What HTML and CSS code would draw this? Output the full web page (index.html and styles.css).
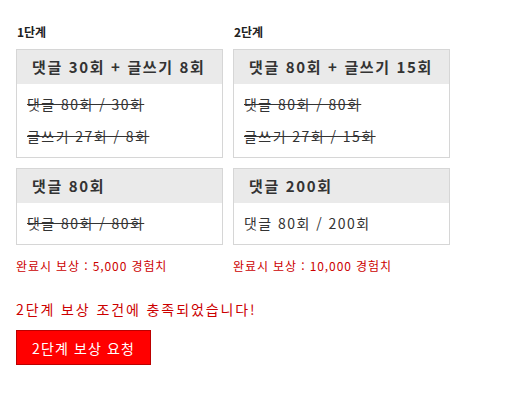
FILE: index.html
```html
<!DOCTYPE html>
<html lang="ko">
<head>
<meta charset="utf-8">
<link rel="stylesheet" href="styles.css">
</head>
<body>
<div class="page">
  <div class="stages">
    <div class="stage">
      <div class="stage-title">1단계</div>
      <div class="card">
        <div class="card-head">댓글 30회 + 글쓰기 8회</div>
        <div class="card-body">
          <p class="done">댓글 80회 / 30회</p>
          <p class="done">글쓰기 27회 / 8회</p>
        </div>
      </div>
      <div class="card">
        <div class="card-head">댓글 80회</div>
        <div class="card-body">
          <p class="done">댓글 80회 / 80회</p>
        </div>
      </div>
      <div class="reward">완료시 보상 : 5,000 경험치</div>
    </div>
    <div class="stage stage-wide">
      <div class="stage-title">2단계</div>
      <div class="card">
        <div class="card-head">댓글 80회 + 글쓰기 15회</div>
        <div class="card-body">
          <p class="done">댓글 80회 / 80회</p>
          <p class="done">글쓰기 27회 / 15회</p>
        </div>
      </div>
      <div class="card">
        <div class="card-head">댓글 200회</div>
        <div class="card-body">
          <p>댓글 80회 / 200회</p>
        </div>
      </div>
      <div class="reward">완료시 보상 : 10,000 경험치</div>
    </div>
  </div>
  <p class="notice">2단계 보상 조건에 충족되었습니다!</p>
  <button class="request">2단계 보상 요청</button>
</div>
</body>
</html>
```
FILE: styles.css
```css
* { box-sizing: border-box; }
html, body { margin: 0; padding: 0; background: #fff; }
body {
  font-family: "Noto Sans CJK KR", "Noto Sans", sans-serif;
  color: #333;
}
.page { padding: 24px 16px 0 16px; }
.stages { display: flex; column-gap: 10px; }
.stage { display: flex; flex-direction: column; width: 207px; }
.stage-wide { width: 217px; }
.stage-title { font-size: 12px; font-weight: bold; line-height: 16px; margin-bottom: 9px; color: #222; padding-left: 1px; }
.card { border: 1px solid #d6d6d6; width: 100%; margin-bottom: 10px; }
.card-head {
  background: #eaeaea;
  height: 34px;
  line-height: 34px;
  padding-left: 15px;
  font-size: 15px;
  font-weight: bold;
  letter-spacing: 1.65px;
  color: #333;
}
.card-body { padding: 4px 10px 5px; }
.card-body p { margin: 0; font-size: 14px; line-height: 32px; letter-spacing: 1.45px; color: #333; }
.card-body p.done { text-decoration: line-through; }
.reward { font-size: 12px; color: #cc0000; line-height: 16px; margin-top: 3px; letter-spacing: 0.9px; }
.notice { margin: 26px 0 0 0; font-size: 14px; line-height: 18px; color: #cc0000; letter-spacing: 1.9px; }
.request {
  margin-top: 12px;
  background: #ff0000;
  border: 1px solid #bb0000;
  color: #fff;
  font-family: "Noto Sans CJK KR", "Noto Sans", sans-serif;
  font-size: 14px;
  letter-spacing: 1.1px;
  width: 135px;
  height: 35px;
  padding: 0;
}
```
